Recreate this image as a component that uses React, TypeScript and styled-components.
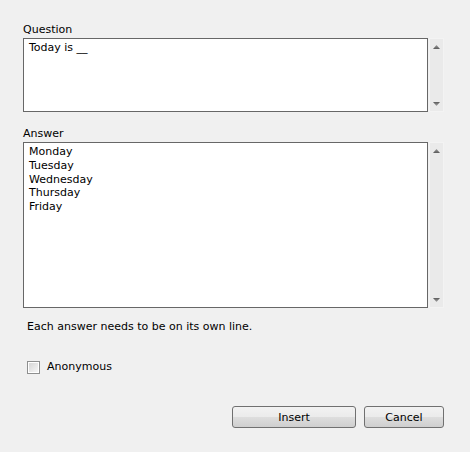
import React from "react";
import styled, { createGlobalStyle } from "styled-components";

const Global = createGlobalStyle`
  html, body { margin: 0; padding: 0; background: #f0f0f0; }
  body { font-family: "DejaVu Sans", Verdana, sans-serif; font-size: 11px; color: #000; }
`;

const Dialog = styled.div`
  width: 470px;
  height: 452px;
  box-sizing: border-box;
  padding: 23px 26px 0 23px;
  display: flex;
  flex-direction: column;
`;

const Label = styled.div<{ $top?: number }>`
  line-height: 14px;
  height: 14px;
  margin-top: ${(p) => p.$top ?? 0}px;
  margin-bottom: 1px;
`;

const FieldRow = styled.div`
  display: flex;
  gap: 1px;
`;

const TextBox = styled.div<{ $h: number }>`
  width: 405px;
  height: ${(p) => p.$h}px;
  box-sizing: border-box;
  border: 1px solid #676767;
  background: #fff;
  padding: 2px 5px;
  line-height: 13.75px;
  white-space: pre;
`;

const ScrollTrack = styled.div`
  width: 15px;
  box-sizing: border-box;
  background: #eaeaea;
  border: 1px solid #f3f3f3;
  display: flex;
  flex-direction: column;
  justify-content: space-between;
  align-items: center;
  padding: 6px 0 5px;
`;

const Hint = styled.div`
  margin-top: 12px;
  padding-left: 4px;
  line-height: 14px;
`;

const CheckRow = styled.label`
  margin-top: 26px;
  display: flex;
  align-items: center;
  gap: 7px;
  padding-left: 4px;
  height: 14px;
  line-height: 14px;
`;

const CheckBox = styled.span`
  width: 13px;
  height: 13px;
  box-sizing: border-box;
  border: 1px solid #8e8f8f;
  padding: 1px;
  background: #fff;
  display: block;
  &::after {
    content: "";
    display: block;
    width: 100%;
    height: 100%;
    background: linear-gradient(135deg, #d6d6d6, #f6f6f6);
  }
`;

const ButtonRow = styled.div`
  margin-top: 32px;
  display: flex;
  justify-content: flex-end;
  gap: 8px;
`;

const Button = styled.button<{ $w: number }>`
  width: ${(p) => p.$w}px;
  height: 22px;
  box-sizing: border-box;
  border: 1px solid #707070;
  border-radius: 3px;
  background: linear-gradient(#f2f2f2 0%, #ebebeb 48%, #dddddd 52%, #cfcfcf 100%);
  font-family: inherit;
  font-size: 11px;
  color: #000;
  padding: 0;
`;

const Arrow = ({ up }: { up?: boolean }) => (
  <svg width="7" height="4" viewBox="0 0 7 4">
    <defs>
      <linearGradient id={up ? "gu" : "gd"} x1="0" y1="0" x2="0" y2="1">
        <stop offset="0" stopColor={up ? "#9a9a9a" : "#5a5a5a"} />
        <stop offset="1" stopColor={up ? "#5a5a5a" : "#a8a8a8"} />
      </linearGradient>
    </defs>
    <polygon
      points={up ? "3.5,0 7,4 0,4" : "0,0 7,0 3.5,4"}
      fill={`url(#${up ? "gu" : "gd"})`}
    />
  </svg>
);

const Field = ({ h, text }: { h: number; text: string }) => (
  <FieldRow>
    <TextBox $h={h}>{text}</TextBox>
    <ScrollTrack>
      <Arrow up />
      <Arrow />
    </ScrollTrack>
  </FieldRow>
);

export default function App() {
  return (
    <>
      <Global />
      <Dialog>
        <Label>Question</Label>
        <Field h={74} text="Today is __" />
        <Label $top={15}>Answer</Label>
        <Field h={166} text={"Monday\nTuesday\nWednesday\nThursday\nFriday"} />
        <Hint>Each answer needs to be on its own line.</Hint>
        <CheckRow>
          <CheckBox />
          Anonymous
        </CheckRow>
        <ButtonRow>
          <Button $w={124}>Insert</Button>
          <Button $w={80}>Cancel</Button>
        </ButtonRow>
      </Dialog>
    </>
  );
}
